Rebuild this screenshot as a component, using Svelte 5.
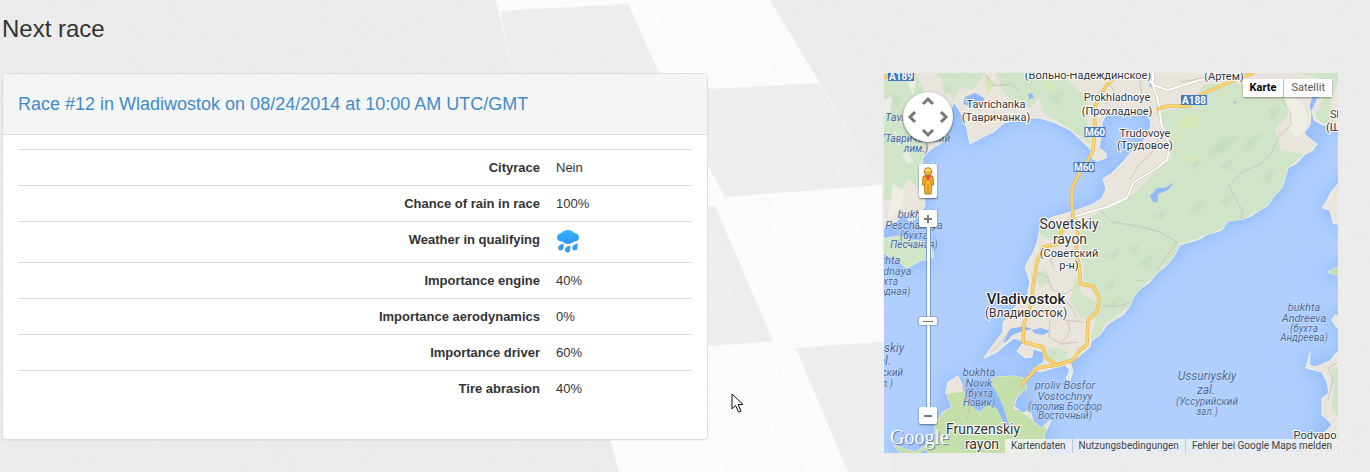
<script>
  const facts = [
    { label: 'Cityrace', value: 'Nein' },
    { label: 'Chance of rain in race', value: '100%' },
    { label: 'Weather in qualifying', icon: true },
    { label: 'Importance engine', value: '40%' },
    { label: 'Importance aerodynamics', value: '0%' },
    { label: 'Importance driver', value: '60%' },
    { label: 'Tire abrasion', value: '40%' },
  ];

  // Map labels: [x, baseline, text, class]
  const places = [
    [1088, 79, '(Вольно-Надеждинское)', 'town'],
    [1224, 80, '(Артем)', 'town'],
    [996, 108, 'Tavrichanka', 'town'],
    [996, 121, '(Тавричанка)', 'town'],
    [1117, 101, 'Prokhladnoye', 'town'],
    [1117, 115, '(Прохладное)', 'town'],
    [1145, 137, 'Trudovoye', 'town'],
    [1145, 149, '(Трудовое)', 'town'],
    [1330, 118, 'Sh', 'town begin'],
    [1326, 131, '(Ш', 'town begin'],
    [1069, 229, 'Sovetskiy', 'district'],
    [1070, 244, 'rayon', 'district'],
    [1069, 257, '(Советский', 'town'],
    [1069, 269, 'р-н)', 'town'],
    [1026, 304, 'Vladivostok', 'city'],
    [1026, 317, '(Владивосток)', 'local'],
    [983, 434, 'Frunzenskiy', 'district'],
    [982, 449, 'rayon', 'district'],
    [1315, 439, 'Podyapo', 'town'],
    [1311, 452, '(Подъяпол', 'town faint'],
    [885, 121, 'Tavrichanskiy', 'sea begin'],
    [916, 142, '(Тавричанский', 'seasmall'],
    [916, 152, 'лим.)', 'seasmall'],
    [914, 218, 'bukhta', 'sea'],
    [914, 229, 'Peschanaya', 'sea'],
    [914, 239, '(бухта', 'seasmall'],
    [914, 248, 'Песчаная)', 'seasmall'],
    [884, 264, 'bukhta', 'sea'],
    [891, 275, 'Vodnaya', 'sea'],
    [884, 285, '(бухта', 'seasmall'],
    [892, 295, 'Водная)', 'seasmall'],
    [880, 352, 'Amurskiy', 'gulf'],
    [882, 365, 'zal.', 'gulf'],
    [879, 376, '(Амурский', 'seasmall'],
    [882, 387, 'зал.)', 'seasmall'],
    [979, 376, 'bukhta', 'sea'],
    [979, 387, 'Novik', 'sea'],
    [979, 397, '(бухта', 'seasmall'],
    [979, 406, 'Новик)', 'seasmall'],
    [1065, 389, 'proliv Bosfor', 'sea'],
    [1065, 400, 'Vostochnyy', 'sea'],
    [1065, 410, '(пролив Босфор', 'seasmall'],
    [1065, 419, 'Восточный)', 'seasmall'],
    [1207, 380, 'Ussuriyskiy', 'gulf'],
    [1206, 394, 'zal.', 'gulf'],
    [1207, 405, '(Уссурийский', 'seasmall'],
    [1207, 415, 'зал.)', 'seasmall'],
    [1304, 311, 'bukhta', 'sea'],
    [1304, 322, 'Andreeva', 'sea'],
    [1304, 332, '(бухта', 'seasmall'],
    [1304, 341, 'Андреева)', 'seasmall'],
  ];

  const shields = [
    { x: 901, y: 76, w: 26, text: 'A189' },
    { x: 1095, y: 132, w: 21, text: 'M60' },
    { x: 1084, y: 167, w: 21, text: 'M60' },
    { x: 1194, y: 100, w: 26, text: 'A188' },
  ];

  const coast = [
    // northern mainland and the Muravyov peninsula
    'M870 60H1350V127L1333 125 1323 125 1314 120 1312 111 1317 100 1324 92 1330 84 1326 76 1321 86 1312 96 1309 106 1311 114 1310 125 1304 133 1309 138 1317 144 1313 150 1304 155 1297 163 1288 168 1285 178 1282 188 1275 195 1267 206 1260 210 1251 216 1243 219 1228 221 1222 230 1206 235 1200 239 1190 242 1180 245 1173 258 1165 267 1157 273 1149 283 1140 289 1133 298 1130 306 1123 315 1114 320 1107 325 1100 335 1091 341 1090 347 1077 358 1070 362 1073 371 1070 380 1066 379 1070 370 1065 365 1050 369 1040 372 1033 369 1044 362 1043 352 1033 349 1032 357 1025 358 1017 351 1024 342 1014 338 997 352 984 358 993 345 1003 332 1003 323 1013 309 1027 296 1030 282 1025 267 1034 251 1038 239 1040 228 1050 218 1064 214 1080 209 1093 204 1102 198 1106 189 1103 179 1112 173 1123 162 1132 151 1143 142 1151 126 1149 113 1143 108 1136 111 1114 110 1106 114 1102 123 1101 136 1099 148 1106 153 1106 158 1097 161 1092 158 1091 150 1083 142 1070 130 1053 122 1040 118 1024 118 1004 123 995 131 981 138 970 144 967 129 963 117 958 108 953 102 950 118 944 141 930 150 923 158 921 175 924 193 925 206 918 217 910 222 904 214 897 221 884 228H870Z',
    'M880 239L900 236 912 240 930 243 934 257 920 261 907 268 899 262 880 251Z',
    // Russky island
    'M948 382L958 376 962 385 965 394 971 402 979 413 988 405 1000 410 1009 424 1000 406 994 391 985 384 996 377 1013 376 1023 378 1027 388 1017 397 1014 406 1022 413 1030 410 1033 421 1041 428 1051 420 1044 436 1048 460H937L925 449 908 460 893 445 915 452 935 440 935 424 943 412 952 407 946 393Z',
    // eastern shore
    'M1345 180L1338 184 1331 192 1327 200 1322 208 1330 210 1333 223 1345 226Z',
    'M1345 265L1336 268 1328 272 1338 276H1345Z M1345 316L1335 315 1332 320 1336 327 1345 333Z',
    'M1345 347L1335 354 1330 361 1315 367 1309 365 1310 353 1306 368 1314 370 1322 372 1327 382 1329 393 1322 398 1322 415 1328 420 1332 425 1325 432 1312 437 1303 443V460H1345Z',
  ].join(' ');

  const woods = [
    'M884 73H915L925 92 919 110 930 133 923 157 920 190 908 178 896 202 884 199Z',
    'M937 73H986L972 90 960 88 953 101 945 84Z',
    'M995 73H1030L1042 93 1031 108 1012 102 1002 88Z',
    'M1034 77L1066 80 1088 98 1087 128 1091 145 1071 129 1043 113Z',
    'M1155 112L1190 107 1204 84 1240 83 1268 90 1290 96 1290 112 1275 130 1281 150 1304 154 1288 168 1282 188 1267 206 1243 219 1222 229 1198 238 1180 244 1173 258 1157 273 1140 289 1130 306 1111 320 1094 327 1100 298 1084 283 1082 255 1080 222 1108 209 1135 193 1157 170 1172 157 1168 132Z',
    'M1300 73H1338V124L1322 123 1315 116 1328 90 1318 78Z',
    'M1075 276L1082 294 1096 302 1098 318 1081 318 1070 301Z',
    'M1034 275L1045 270 1050 281 1041 288Z',
    'M1041 352L1054 347 1067 351 1067 361 1050 362Z',
    'M1094 327L1107 322 1098 337 1089 340Z',
    'M1035 230L1060 220 1069 226 1059 240 1047 239Z',
    'M1338 82L1331 99 1330 120 1338 123Z M1338 368L1330 369 1333 387 1332 410 1338 416Z M1338 433L1324 438 1320 453H1338Z',
  ].join(' ');

  const yellowRoads = [
    'M1118 75L1107 85 1099 97 1094 109 1095 128 1093 151 1085 165 1077 178 1072 188 1072 203 1073 217 1078 234 1076 249 1080 271 1080 284 1093 286 1099 298 1097 312 1088 320 1087 345 1080 350 1073 360 1057 365 1037 368 1022 384',
    'M1073 217L1062 230 1058 244 1043 247 1037 262 1033 285 1032 302 1024 323 1023 342 1043 347 1045 357 1057 365',
    'M1253 73L1230 82 1200 95 1188 106 1168 106 1158 109',
    'M884 78L893 73',
  ].join(' ');

  const whiteRoads = 'M1153 73V85L1158 100 1162 127 1170 147 1167 160 1157 168 1133 183 1127 198 1107 207 1073 217M1153 85L1168 90 1200 80 1240 73M1146 73L1153 85';
</script>

<svelte:head><title>Next race</title></svelte:head>

<div class="page">
  <svg class="backdrop" viewBox="0 0 1370 472" preserveAspectRatio="none" aria-hidden="true">
    <defs>
      <filter id="grain" x="0" y="0" width="100%" height="100%">
        <feTurbulence type="fractalNoise" baseFrequency="0.35" numOctaves="2" seed="4" />
        <feColorMatrix values="0 0 0 0 0.5  0 0 0 0 0.5  0 0 0 0 0.5  0.4 0 0 0 -0.17" />
      </filter>
    </defs>
    <rect width="1370" height="472" fill="#ececec" />
    <path fill="#fdfbfc" d="M496 0H770L882 186 884 342 848 472H619L608 432 514 80Z" />
    <g fill="#eeeeef">
      <path d="M500 11L628 4 668 92H516Z" />
      <path d="M668 91L819 83 882 185 725 197Z" />
      <path d="M640 212L715 206 773 341 640 352Z" />
      <path d="M796 348L890 341V472H848Z" />
    </g>
    <rect width="1370" height="472" filter="url(#grain)" opacity="0.4" />
  </svg>

  <main>
    <h3>Next race</h3>
    <div class="columns">
      <section class="panel">
        <header><h4><a href="#race">Race #12 in Wladiwostok on 08/24/2014 at 10:00 AM UTC/GMT</a></h4></header>
        <div class="body">
          <table>
            <tbody>
              {#each facts as fact}
                <tr>
                  <th scope="row">{fact.label}</th>
                  <td>
                    {#if fact.icon}
                      <svg class="rain" viewBox="0 0 24 24" role="img" aria-label="Rain">
                        <defs>
                          <linearGradient id="cloud" x1="0" y1="0" x2="0" y2="1">
                            <stop offset="0" stop-color="#35baf6" />
                            <stop offset="1" stop-color="#2e90fa" />
                          </linearGradient>
                        </defs>
                        <path fill="url(#cloud)" d="M5 3C7 1 10 0 12 0S17 1 18.500 3C22 3.500 23 5.500 23 7.500C23 10 21 11.500 18 11.500C16.500 13 14 14 12 14S7.500 13 6.500 11.500C3 11.500 1 10 1 7.500C1 5.500 2.500 3.500 5 3Z" />
                        <g fill="#3a9be8">
                          <path d="M7.500 13.500V17.500A2.700 2.700 0 1 1 2.500 16.500C3.500 14.500 5.500 14.500 7.500 13.500Z" />
                          <path d="M14.300 15V19.500A2.700 2.700 0 1 1 9.300 18.500C10.300 16.500 12.500 16.500 14.300 15Z" />
                          <path d="M21.500 13V17.500A2.700 2.700 0 1 1 16.500 16.500C17.500 14.500 19.500 14.500 21.500 13Z" />
                        </g>
                      </svg>
                    {:else}{fact.value}{/if}
                  </td>
                </tr>
              {/each}
            </tbody>
          </table>
        </div>
      </section>

      <section class="map" aria-label="Map">
        <svg class="tiles" viewBox="884 73 454 380">
          <defs>
            <filter id="shore" x="-10%" y="-10%" width="120%" height="120%"><feGaussianBlur stdDeviation="9" /></filter>
            <clipPath id="landclip"><path d={coast} /></clipPath>
            <filter id="soft"><feGaussianBlur stdDeviation="1" /></filter>
          </defs>
          <rect x="884" y="73" width="454" height="380" fill="#b0cfff" />
          <path d={coast} fill="#95bdfb" stroke="#95bdfb" stroke-width="10" filter="url(#shore)" />
          <path d={coast} fill="#e9e5dc" stroke="#f3f1ea" stroke-width="1" />
          <g clip-path="url(#landclip)">
            <path d={woods} fill="#d0e4c8" />
            <path d="M880 236H936V268H880Z" fill="#cfe5c4" />
            <path d="M966 376L1023 374 1027 389 1016 398 1013 410 1034 410 1050 435 1050 460H930L935 420 950 407 946 394 962 392Z" fill="#c5dfaa" />
            <path d="M880 440H935V460H880Z M1328 265H1340V278H1328Z" fill="#c5dfaa" />
            <path d="M1018 396L1024 402 1023 410 1031 413 1037 424 1030 418 1019 411 1015 405Z" fill="#e9e5dc" />
            <g fill="#c8dec0" filter="url(#soft)">
              <path d="M1208 152L1222 139 1240 135 1226 150 1211 156Z M1247 140L1262 132 1256 144 1243 152Z M1190 164L1203 158 1196 170Z M1218 167L1235 157 1228 170Z" />
              <path d="M1104 257L1120 249 1114 260Z M1127 251L1142 241 1136 253Z M1138 264L1154 252 1150 268Z M1102 288L1116 277 1112 292Z M1186 212L1205 200 1200 213Z M1220 201L1237 190 1226 206Z M1151 218L1166 209 1162 219Z M1110 302L1122 297 1113 310Z" />
              <path d="M888 90L900 98 897 109Z M942 82L952 90 945 96Z M1045 96L1063 91 1059 106Z M1268 110L1281 106 1274 122Z M1262 177L1276 169 1268 186Z" />
            </g>
            <g fill="#f0eee5" opacity="0.9">
              <path d="M884 100L892 96 891 112 884 116Z M908 82L916 80 913 96Z M893 130L901 138 899 148Z M902 155L907 150 914 163 907 163Z M893 184L904 191 902 205 896 214 888 219Z" />
              <path d="M1283 90L1302 104 1308 118 1306 130 1295 139 1290 129 1288 112Z" />
            </g>
            <path d="M1184 116L1192 114 1200 120 1194 127 1182 132 1174 124Z M1172 137L1180 132 1183 142Z M1183 155L1200 157 1193 164Z M985 75L995 84 987 96Z M1044 79L1056 88 1048 94Z" fill="#d8e6b5" />
          </g>
          <g fill="#8fb9fb">
            <path d="M965 97L975 93 984 98 983 105 971 106 963 104Z M1028 94L1032 93 1034 98 1029 99Z M1032 330L1041 328 1050 331 1043 335 1034 333Z M1150 196L1157 188 1165 188 1175 182 1168 190 1158 194 1158 202 1153 202Z M1233 102L1236 101 1236 104Z M1150 82L1152 88 1149 86Z" />
            <path d="M1010 329L1024 326 1032 329 1020 332 1012 335 1007 341 1003 343Z" />
            <path d="M972 380L990 382 996 392 1002 404 1010 428 1004 424 998 410 989 402 976 410 966 394Z" />
          </g>
          <g fill="none" stroke="#c7bfb4" stroke-width="0.800">
            <path d="M1281 98L1290 112 1291 125 1279 136 1272 153 1262 163 1242 172 1229 186 1243 212 1241 219M1100 210L1112 222 1138 226 1160 232 1177 242 1166 257 1157 270M1135 280L1144 281M1129 303L1115 307 1103 305M1180 82L1208 77 1245 73M986 75L994 86 1010 84 1020 90" />
            <path d="M1036 272L1048 277 1052 290 1065 294 1075 287M1040 300L1057 296 1070 305 1077 318M1031 315L1050 312 1065 320 1084 322M1050 320L1049 337 1062 344 1078 342M1062 250L1051 259 1054 270M1068 320L1070 332 1060 345M1010 330L1001 342 991 352M1110 85L1118 96 1104 104M1140 80L1142 96 1152 103M1150 130L1158 140 1151 154 1138 166 1130 180" />
            <path d="M1022 385L1030 400 1038 402M962 386L970 404 967 420M1338 362L1328 368 1333 380 1328 400" />
          </g>
          <g fill="none" stroke-linejoin="round" stroke-linecap="round">
            <path d={whiteRoads} stroke="#c9c0b5" stroke-width="3" />
            <path d={whiteRoads} stroke="#fff" stroke-width="2" />
            <path d={yellowRoads} stroke="#e8b95c" stroke-width="3.500" />
            <path d={yellowRoads} stroke="#fbd66f" stroke-width="2" />
          </g>
          {#each shields as s}
            <rect x={s.x - s.w / 2} y={s.y - 5} width={s.w} height="10" fill="#4379bd" />
            <text class="shield" x={s.x} y={s.y + 4}>{s.text}</text>
          {/each}
          {#each places as [x, y, text, kind]}
            <text {x} {y} class={kind}>{text}</text>
          {/each}
          <text class="logo" x="890" y="444">Google</text>
        </svg>

        <div class="controls">
          <div class="pan">
            <button class="up" aria-label="Pan up"><svg viewBox="0 0 14 10"><path d="M2 8L7 3L12 8" /></svg></button>
            <button class="left" aria-label="Pan left"><svg viewBox="0 0 10 14"><path d="M8 2L3 7L8 12" /></svg></button>
            <button class="right" aria-label="Pan right"><svg viewBox="0 0 10 14"><path d="M2 2L7 7L2 12" /></svg></button>
            <button class="down" aria-label="Pan down"><svg viewBox="0 0 14 10"><path d="M2 2L7 7L12 2" /></svg></button>
          </div>
          <button class="box person" aria-label="Street View">
            <svg viewBox="0 0 14 28">
              <g stroke="#b57a1d" stroke-width="1" fill="#f7b32b">
                <path d="M2 9.500Q7 7 12 9.500L12.500 18H10.500L10 27H4L3.500 18H1.500Z" />
                <circle cx="7" cy="4.500" r="3.800" />
              </g>
              <path d="M3 9L7 14 11 9 7 8Z" fill="#e4573d" />
              <path d="M7 17V27M4 12V18M10 12V18" stroke="#c98614" stroke-width="1" />
              <path d="M4.500 3.500Q7 1.500 9.500 3.500" stroke="#fce08b" fill="none" />
            </svg>
          </button>
          <button class="box" aria-label="Zoom in"><svg viewBox="0 0 10 10"><path d="M1 5H9M5 1V9" /></svg></button>
          <input type="range" min="0" max="21" value="10" aria-label="Zoom" />
          <button class="box" aria-label="Zoom out"><svg viewBox="0 0 10 10"><path d="M1 5H9" /></svg></button>
        </div>

        <div class="types">
          <button class="active">Karte</button>
          <button>Satellit</button>
        </div>

        <div class="credits">
          <a href="#data">Kartendaten</a>
          <a href="#terms">Nutzungsbedingungen</a>
          <a href="#report">Fehler bei Google Maps melden</a>
        </div>
      </section>
    </div>
  </main>

  <svg class="cursor" viewBox="0 0 13 20" aria-hidden="true">
    <path d="M1 1V16L4.500 12.500L7.500 19L10 18L7 11.500H12Z" fill="#fff" stroke="#111" stroke-width="1" />
  </svg>
</div>

<style>
  :global(body) { margin: 0; background: #ececec; }
  .page {
    position: relative;
    min-height: 100vh;
    overflow: hidden;
    font-family: "Liberation Sans", Arial, sans-serif;
    font-size: 13px;
    line-height: 19px;
    color: #333;
  }
  .page, .page * { box-sizing: border-box; }
  .backdrop { position: absolute; inset: 0; width: 100%; height: 100%; }
  main { position: relative; padding: 16px 32px 16px 2px; }
  h3 { margin: 0 0 31px; font-size: 24px; line-height: 26px; font-weight: 400; }
  .columns {
    display: grid;
    grid-template-columns: minmax(0, 706fr) minmax(0, 454fr);
    gap: 176px;
    align-items: start;
  }
  .panel {
    background: #fff;
    border: 1px solid #ddd;
    border-radius: 4px;
    box-shadow: 0 1px 1px rgba(0, 0, 0, 0.05);
  }
  header {
    padding: 20px 15px;
    background: #f5f5f5;
    border-bottom: 1px solid #ddd;
    border-radius: 3px 3px 0 0;
  }
  h4 { margin: 0; font-size: 18px; line-height: 20px; font-weight: 400; }
  h4 a { color: #428bca; text-decoration: none; }
  .body { padding: 14px 15px 33px; }
  table { width: 100%; border-collapse: collapse; table-layout: fixed; }
  th, td { padding: 8px; border-top: 1px solid #ddd; vertical-align: top; text-align: left; }
  th { width: 530px; text-align: right; font-weight: 700; }
  .rain { display: block; width: 24px; height: 24px; }

  .map { position: relative; overflow: hidden; font-family: Roboto, Arial, sans-serif; }
  .tiles { display: block; width: 100%; height: auto; }
  .tiles text { text-anchor: middle; paint-order: stroke; stroke-linejoin: round; }
  .town, .district, .city, .local { fill: #333; stroke: #fff; stroke-width: 2px; font-size: 11px; }
  .tiles .local { font-size: 12px; }
  .tiles .district { font-size: 14px; }
  .tiles .city { font-size: 15px; font-weight: 500; fill: #222; }
  .tiles .faint { opacity: 0.5; }
  .tiles .begin { text-anchor: start; }
  .sea, .seasmall, .gulf { fill: #4c6a94; stroke: rgba(215, 230, 255, 0.7); stroke-width: 1px; font-style: italic; font-size: 11px; }
  .tiles .seasmall { font-size: 10px; }
  .tiles .gulf { font-size: 12px; }
  .tiles .shield { fill: #fff; font-size: 10px; font-weight: 700; }
  .tiles .logo {
    text-anchor: start;
    font-family: "Liberation Serif", serif;
    font-size: 20px;
    fill: #fff;
    text-shadow: 1px 1px 1px #5f7899;
  }

  button { margin: 0; padding: 0; border: 0; background: none; font: inherit; color: inherit; }
  button svg { display: block; fill: none; stroke: #777; stroke-width: 2px; }
  .controls {
    position: absolute;
    top: 19px;
    left: 19px;
    width: 50px;
    display: flex;
    flex-direction: column;
    align-items: center;
  }
  .pan {
    display: grid;
    grid-template: "a up b" 16px "left mid right" 16px "c down d" 16px / 16px 16px 16px;
    place-content: center;
    place-items: center;
    width: 50px;
    height: 50px;
    margin-bottom: 22px;
    background: #fff;
    border-radius: 50%;
    box-shadow: 0 1px 3px rgba(0, 0, 0, 0.5);
  }
  .pan svg { stroke-width: 3px; }
  .up { grid-area: up; }
  .down { grid-area: down; }
  .left { grid-area: left; }
  .right { grid-area: right; }
  .up svg, .down svg { width: 14px; height: 10px; }
  .left svg, .right svg { width: 10px; height: 14px; }
  .box {
    display: grid;
    place-items: center;
    width: 18px;
    height: 17px;
    background: #fff;
    border-radius: 2px;
    box-shadow: 0 1px 2px rgba(0, 0, 0, 0.5);
  }
  .box svg { width: 10px; height: 10px; }
  .person { height: 34px; margin-bottom: 12px; }
  .person svg { width: 14px; height: 28px; stroke: none; }
  input {
    appearance: none;
    writing-mode: vertical-lr;
    direction: rtl;
    width: 18px;
    height: 180px;
    margin: 0;
    background: linear-gradient(#fff, #fff) center / 3px 100% no-repeat, linear-gradient(#7c9cc9, #7c9cc9) center / 5px 100% no-repeat;
  }
  input::-webkit-slider-thumb {
    appearance: none;
    width: 18px;
    height: 8px;
    border-radius: 2px;
    background: linear-gradient(#777, #777) center / 10px 1px no-repeat, #fff;
    box-shadow: 0 0 2px rgba(0, 0, 0, 0.6);
  }
  .types {
    position: absolute;
    top: 6px;
    right: 6px;
    display: flex;
    gap: 1px;
    background: #bbb;
    box-shadow: 0 1px 2px rgba(0, 0, 0, 0.4);
    border-radius: 2px;
    font-size: 11px;
    line-height: 18px;
    color: #565656;
  }
  .types button { padding: 0 7px; background: #fff; }
  .types .active { font-weight: 700; color: #000; }
  .credits {
    position: absolute;
    right: 0;
    bottom: 0;
    display: flex;
    background: rgba(245, 245, 245, 0.75);
    font-size: 10px;
    line-height: 14px;
    white-space: nowrap;
  }
  .credits a { padding: 0 6px; color: #444; text-decoration: none; }
  .credits a + a { border-left: 1px solid #b8c8dc; }
  .cursor { position: absolute; left: 731px; top: 393px; width: 13px; height: 20px; }
</style>
